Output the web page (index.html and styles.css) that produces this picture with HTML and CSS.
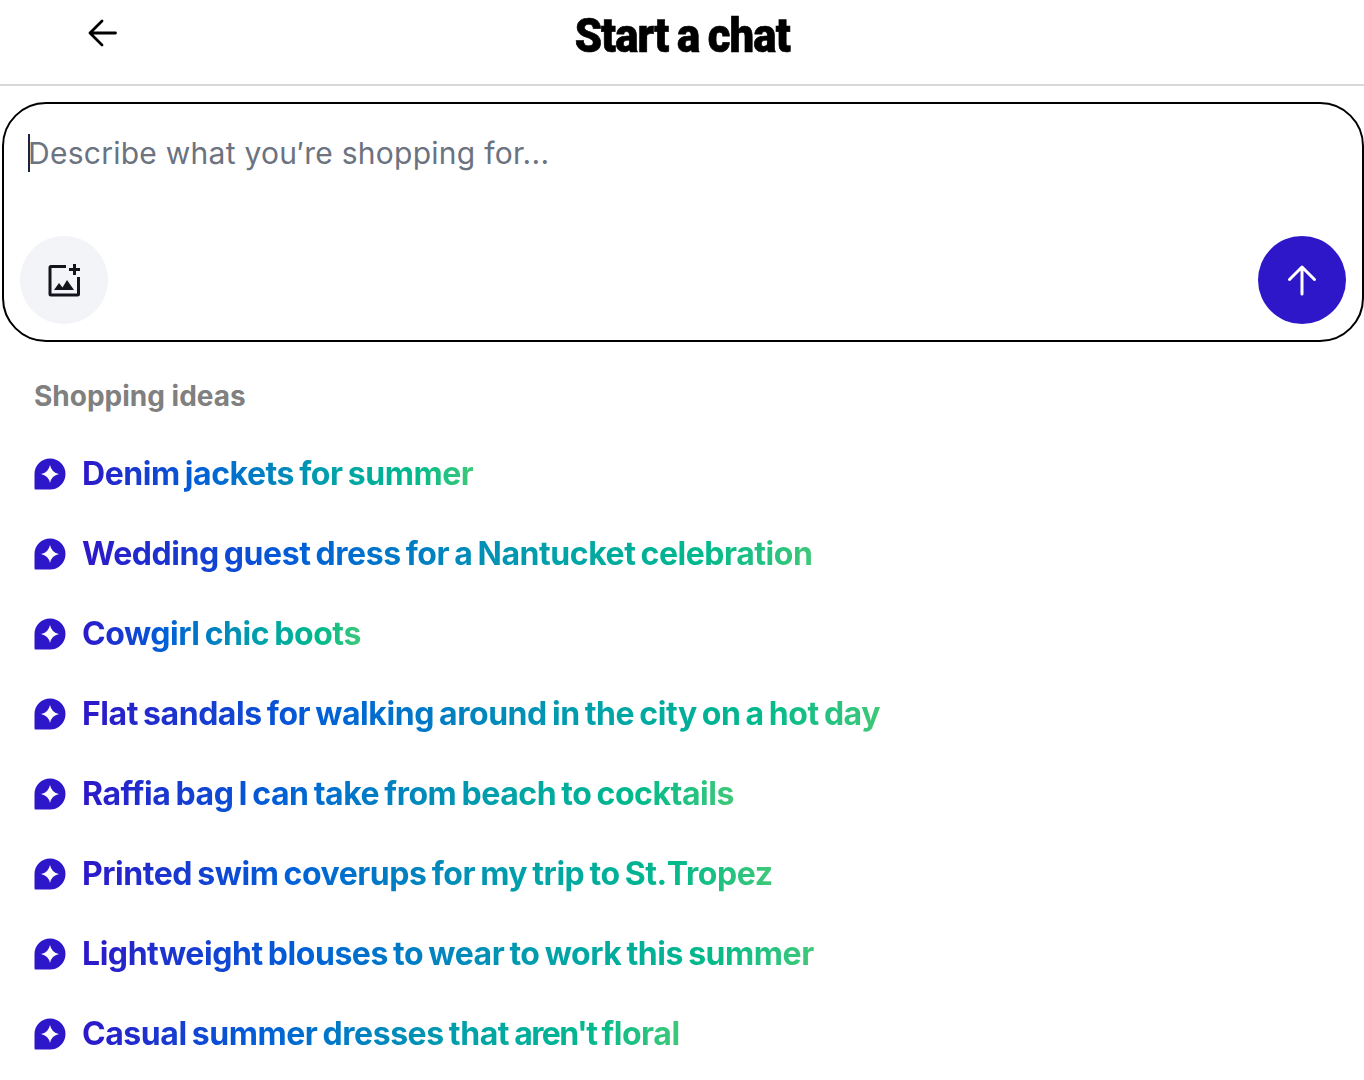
FILE: index.html
```html
<!DOCTYPE html>
<html lang="en">
<head>
<meta charset="utf-8">
<title>Start a chat</title>
<link rel="stylesheet" href="styles.css">
</head>
<body>
<header class="topbar">
  <button class="back" aria-label="Back">
    <svg width="32" height="32" viewBox="0 0 32 32" fill="none" stroke="#000" stroke-width="2.8" stroke-linecap="round" stroke-linejoin="round"><path d="M28.500 16H3M15 4 3 16l12 12"/></svg>
  </button>
  <h1 class="title"><span class="title-text">Start a chat</span></h1>
</header>
<section class="composer">
  <div class="input"><span class="caret"></span><span class="placeholder">Describe what you′re shopping for...</span></div>
  <div class="actions">
    <button class="round add" aria-label="Add image">
      <svg width="34" height="34" viewBox="0 0 34 34" fill="none"><path d="M19 3.500H4a1 1 0 0 0-1 1V31a1 1 0 0 0 1 1h26.500a1 1 0 0 0 1-1V14" stroke="#14141c" stroke-width="3"/><path d="M27.500 1v11M22 6.500h11" stroke="#14141c" stroke-width="3"/><path d="M7 27l5-7 3.500 4.500L20 17l7 10z" fill="#14141c"/></svg>
    </button>
    <button class="round send" aria-label="Send">
      <svg width="32" height="32" viewBox="0 0 32 32" fill="none" stroke="#fff" stroke-width="3" stroke-linecap="round" stroke-linejoin="round"><path d="M16 30V3M3.500 15.500 16 3l12.500 12.500"/></svg>
    </button>
  </div>
</section>
<section class="ideas">
  <h2 class="ideas-title">Shopping ideas</h2>
  <ul class="list">
    <li class="idea"><svg class="spark" viewBox="0 0 32 32"><use href="#spark"/></svg><span class="label">Denim jackets for summer</span></li>
    <li class="idea"><svg class="spark" viewBox="0 0 32 32"><use href="#spark"/></svg><span class="label">Wedding guest dress for a Nantucket celebration</span></li>
    <li class="idea"><svg class="spark" viewBox="0 0 32 32"><use href="#spark"/></svg><span class="label">Cowgirl chic boots</span></li>
    <li class="idea"><svg class="spark" viewBox="0 0 32 32"><use href="#spark"/></svg><span class="label">Flat sandals for walking around in the city on a hot day</span></li>
    <li class="idea"><svg class="spark" viewBox="0 0 32 32"><use href="#spark"/></svg><span class="label">Raffia bag I can take from beach to cocktails</span></li>
    <li class="idea"><svg class="spark" viewBox="0 0 32 32"><use href="#spark"/></svg><span class="label">Printed swim coverups for my trip to <span class="tight-word">St. Tropez</span></span></li>
    <li class="idea"><svg class="spark" viewBox="0 0 32 32"><use href="#spark"/></svg><span class="label">Lightweight blouses to wear to work this summer</span></li>
    <li class="idea"><svg class="spark" viewBox="0 0 32 32"><use href="#spark"/></svg><span class="label">Casual summer dresses that <span class="tight-letter">aren't</span> floral</span></li>
  </ul>
</section>
<svg class="defs" width="0" height="0"><defs><symbol id="spark" viewBox="0 0 32 32"><path d="M16 .5A15.500 15.500 0 0 1 16 31.500H1.500a1 1 0 0 1-1-1V16A15.500 15.500 0 0 1 16 .5z" fill="#2e17c9"/><path d="M16 7Q17.500 14.500 25 16 17.500 17.500 16 25 14.500 17.500 7 16 14.500 14.500 16 7z" fill="#fff"/></symbol></defs></svg>
</body>
</html>
```
FILE: styles.css
```css
* { box-sizing: border-box; }
html, body { margin: 0; padding: 0; background: #fff; }
body { font-family: "Inter", "Liberation Sans", sans-serif; height: 1080px; overflow: hidden; }
button { border: 0; padding: 0; background: none; display: flex; align-items: center; justify-content: center; }

.topbar { height: 86px; border-bottom: 2px solid #d9d9d9; display: flex; justify-content: center; position: relative; }
.back { position: absolute; left: 87px; top: 17px; width: 32px; height: 32px; }
.title { margin: 1px 0 0; font-size: 48px; line-height: 70px; font-weight: 900; font-family: "Roboto", "Liberation Sans", sans-serif; color: #000; }
.title-text { display: inline-block; transform: scaleX(0.91); letter-spacing: -1px; word-spacing: -1.500px; white-space: nowrap; -webkit-text-stroke: 0.7px #000; }

.composer { margin: 16px 0 0 2px; width: 1362px; height: 240px; border: 2px solid #000; border-radius: 44px; padding: 30px 16px 16px 24px; display: flex; flex-direction: column; justify-content: space-between; }
.input { display: flex; align-items: center; height: 38px; position: relative; }
.caret { position: absolute; left: 0; top: 0; width: 2px; height: 38px; background: #1a2340; }
.placeholder { font-size: 30px; color: #6b7280; line-height: 38px; letter-spacing: 0.26px; }
.actions { display: flex; justify-content: space-between; margin-left: -8px; }
.round { width: 88px; height: 88px; border-radius: 50%; }
.add { background: #f3f4f8; }
.send { background: #2e17c9; }

.ideas { padding: 0 0 0 35px; }
.ideas-title { margin: 36px 0 0 -1px; font-size: 28px; line-height: 36px; font-weight: 700; color: #808080; }
.list { list-style: none; margin: 20px 0 0; padding: 0; }
.idea { height: 80px; display: flex; align-items: center; gap: 16px; margin-left: -1px; }
.spark { width: 32px; height: 32px; flex: none; }
.label { font-size: 32px; line-height: 40px; font-weight: 650; letter-spacing: -0.450px; word-spacing: -2px; background: linear-gradient(90deg, #2e17c9 0%, #0060d8 30%, #00a3a8 65%, #00b98c 85%, #3fc878 100%); -webkit-background-clip: text; background-clip: text; color: transparent; white-space: nowrap; }
.tight-word { word-spacing: -6px; }
.tight-letter { letter-spacing: -1.600px; }
.defs { position: absolute; }
```
